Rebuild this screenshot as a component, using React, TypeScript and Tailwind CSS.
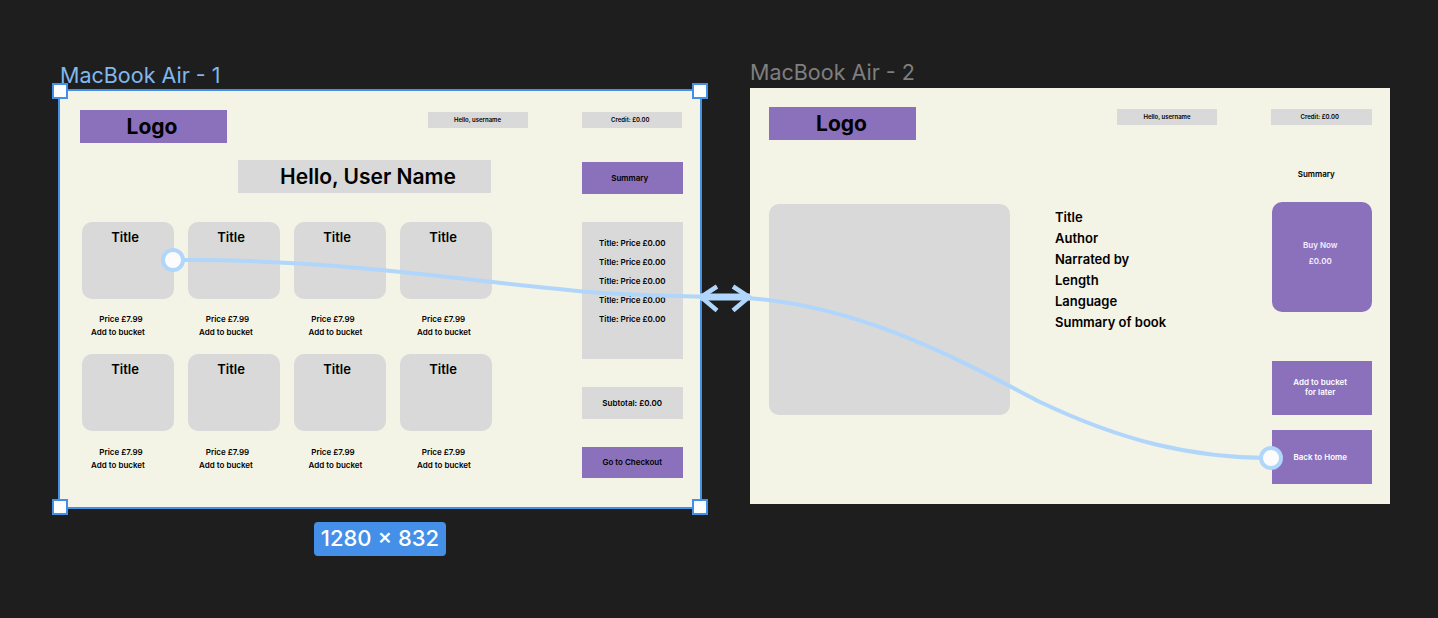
const purple = "bg-[#8b71bb]";

function TopBar() {
  return (
    <div className="flex items-start">
      <div className={`${purple} w-[147px] h-[33px] flex items-center justify-center text-[21px] font-bold text-black pr-[2px]`}>Logo</div>
      <div className="ml-[201px] mt-[2px] w-[100px] h-[15.5px] bg-[#d9d9d9] flex items-center justify-center text-[6px] font-semibold text-black">Hello, username</div>
      <div className="ml-[54px] mt-[2px] w-[100.5px] h-[15.5px] bg-[#d9d9d9] flex items-center justify-center text-[6px] font-semibold text-black pr-[3px]">Credit: £0.00</div>
    </div>
  );
}

const offsets = [
  { price: "mr-[13px]", add: "mr-[19px]" },
  { price: "mr-[12px]", add: "mr-[15px]" },
  { price: "mr-[13px]", add: "mr-[8px]" },
  { price: "mr-[4px]", add: "mr-[3px]" },
];

function BookCard({ col }: { col: number }) {
  return (
    <div className="w-[92px] flex flex-col items-center">
      <div className="w-[92px] h-[77px] rounded-[10px] bg-[#d9d9d9] flex justify-center pt-[7px] pr-[5px] text-[13px] leading-[17px] font-semibold text-black">Title</div>
      <div className={`mt-[14px] h-[13px] flex items-center text-[8px] font-semibold text-black ${offsets[col].price}`}>Price £7.99</div>
      <div className={`h-[13px] flex items-center text-[8px] font-semibold text-black ${offsets[col].add}`}>Add to bucket</div>
    </div>
  );
}

function HomeFrame() {
  return (
    <div className="absolute left-[60px] top-[91px] w-[640px] h-[416px] bg-[#f3f3e6] pl-[19.5px] pt-[19px]">
      <TopBar />
      <div className="flex mt-[17px]">
        <div className="ml-[158.5px] w-[253px] h-[33px] bg-[#d9d9d9] flex items-center justify-center text-[21px] font-semibold text-black pl-[7px]">Hello, User Name</div>
        <div className={`${purple} ml-[91px] mt-[2px] w-[100.5px] h-[31.5px] flex items-center justify-center text-[8px] font-semibold text-black pr-[5px]`}>Summary</div>
      </div>
      <div className="flex mt-[28px]">
        <div className="ml-[2px] grid grid-cols-[92px_92px_92px_92px] gap-x-[14px] gap-y-[15.5px] content-start w-[410px]">
          {[0, 1, 2, 3, 0, 1, 2, 3].map((col, i) => (
            <BookCard key={i} col={col} />
          ))}
        </div>
        <div className="ml-[90.5px] w-[100.5px] flex flex-col">
          <div className="h-[137.5px] bg-[#d9d9d9] flex flex-col items-center pt-[15px] gap-[6px] text-[8px] font-semibold text-black">
            {[1, 2, 3, 4, 5].map(n => (
              <div key={n} className="h-[13px] flex items-center">Title: Price £0.00</div>
            ))}
          </div>
          <div className="mt-[28px] h-[31.5px] bg-[#d9d9d9] flex items-center justify-center text-[8px] font-semibold text-black">Subtotal: £0.00</div>
          <div className={`${purple} mt-[28px] h-[31.5px] flex items-center justify-center text-[8px] font-semibold text-black`}>Go to Checkout</div>
        </div>
      </div>
    </div>
  );
}

function DetailFrame() {
  return (
    <div className="absolute left-[750px] top-[88px] w-[640px] h-[416px] bg-[#f3f3e6] pl-[19px] pt-[19px]">
      <TopBar />
      <div className="flex mt-[64px]">
        <div className="w-[241px] h-[211px] rounded-[10px] bg-[#d9d9d9]"></div>
        <div className="ml-[45px] w-[216.5px] pt-[3px] flex flex-col text-[13px] font-semibold text-black">
          {["Title", "Author", "Narrated by", "Length", "Language", "Summary of book"].map(t => (
            <div key={t} className="h-[21px] flex items-center">{t}</div>
          ))}
        </div>
        <div className="w-[100.5px] -mt-[36px] flex flex-col">
          <div className="h-[14px] flex items-center justify-center text-[8px] font-semibold text-black pr-[11px] -mt-[1px] mb-[21px]">Summary</div>
          <div className={`${purple} h-[109.5px] rounded-[10px] flex flex-col items-center justify-center gap-[3px] pb-[8px] pr-[3px] text-[8px] font-semibold text-[#f3eefb]`}>
            <div className="h-[13px] flex items-center">Buy Now</div>
            <div className="h-[13px] flex items-center">£0.00</div>
          </div>
          <div className={`${purple} mt-[49.5px] h-[53.5px] flex flex-col items-center pt-[17px] pr-[3px] text-[8px] leading-[9.5px] font-semibold text-white text-center`}>
            <span>Add to bucket</span>
            <span>for later</span>
          </div>
          <div className={`${purple} mt-[15.5px] h-[53.5px] flex items-center justify-center pr-[3px] text-[8px] font-semibold text-white`}>Back to Home</div>
        </div>
      </div>
    </div>
  );
}

function Handle({ pos }: { pos: string }) {
  return <div className={`absolute w-[16px] h-[16px] bg-white border-2 border-[#4490e8] ${pos}`}></div>;
}

export default function App() {
  return (
    <div className="relative w-[1438px] h-[618px] overflow-hidden bg-[#1e1e1e] font-['Inter',sans-serif]">
      <div className="absolute left-[60px] top-[62px] text-[21.5px] leading-[26px] text-[#7fb8ee]">MacBook Air - 1</div>
      <div className="absolute left-[750px] top-[59px] text-[21.5px] leading-[26px] text-[#7f7f7f]">MacBook Air - 2</div>
      <HomeFrame />
      <DetailFrame />

      {/* selection box round the first frame */}
      <div className="absolute left-[58px] top-[89px] w-[644px] h-[420px] border-2 border-[#4490e8]"></div>
      <Handle pos="left-[52px] top-[83px]" />
      <Handle pos="left-[692px] top-[83px]" />
      <Handle pos="left-[52px] top-[499px]" />
      <Handle pos="left-[692px] top-[499px]" />
      <div className="absolute left-[314px] top-[521.5px] w-[132px] h-[34px] rounded-[4px] bg-[#4490e8] flex items-center justify-center text-[22px] font-medium text-white">1280 × 832</div>

      {/* prototype connector */}
      <svg className="absolute left-0 top-0" width="1438" height="618" fill="none" stroke="#b0d6fb">
        <path d="M173 260 C 330 258, 480 283, 590 292 C 640 296, 680 296.5, 725 297 C 850 299, 960 360, 1040 402 C 1120 440, 1190 458, 1271 458" strokeWidth="4" />
        <path d="M700 297 H750" strokeWidth="7" />
        <path d="M717 286.5 L701 297 L717 310.5 M733 286.5 L749 297 L733 310.5" strokeWidth="4.5" />
        <circle cx="173" cy="260" r="10" fill="#fcfcfc" strokeWidth="4" />
        <circle cx="1271" cy="458" r="10" fill="#fcfcfc" strokeWidth="4" />
      </svg>
    </div>
  );
}
